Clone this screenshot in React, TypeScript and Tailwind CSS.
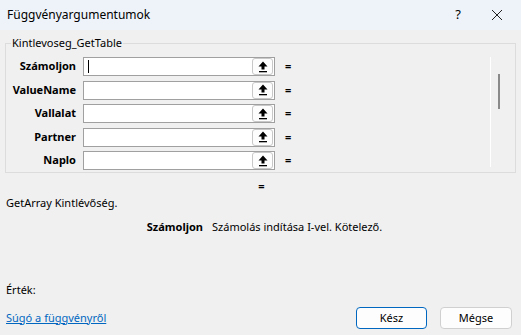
import React from 'react';

const rows = ['Számoljon', 'ValueName', 'Vallalat', 'Partner', 'Naplo'];

function RefButton() {
  return (
    <div className="w-[21px] h-[17px] mr-[1px] border border-[#c8c8c8] rounded-[3px] bg-[#fdfdfd] flex items-center justify-center">
      <svg width="10" height="12" viewBox="0 0 10 12">
        <path d="M5 0.5 L9.5 5.5 L6.5 5.5 L6.5 8.5 L3.5 8.5 L3.5 5.5 L0.5 5.5 Z" fill="#000" />
        <rect x="1" y="10" width="8" height="1.3" fill="#000" />
      </svg>
    </div>
  );
}

export default function App() {
  return (
    <div
      className="w-[521px] h-[335px] bg-[#f0f0f0] text-[11px] text-black overflow-hidden flex flex-col"
      style={{ fontFamily: '"Noto Sans", sans-serif' }}
    >
      {/* title bar */}
      <div className="h-[30px] bg-[#eef3f9] flex items-center pl-[7px] text-[12px]">
        <span className="flex-1">Függvényargumentumok</span>
        <span className="w-[20px] text-center mr-[23px] text-[13px]">?</span>
        <svg width="12" height="12" viewBox="0 0 12 12" className="mr-[18px]">
          <path d="M1 1 L11 11 M11 1 L1 11" stroke="#222" strokeWidth="1" />
        </svg>
      </div>

      {/* argument group */}
      <div className="relative mx-[5px] mt-[13px] h-[130px] border border-[#dcdcdc]">
        <span className="absolute -top-[9px] left-[5px] bg-[#f0f0f0] px-[1px] leading-[16px]">
          Kintlevoseg_GetTable
        </span>
        <div className="flex flex-col gap-[4.5px] pt-[13px]">
          {rows.map((r, i) => (
            <div key={r} className="flex items-center h-[19px]">
              <span className="w-[70px] text-right font-bold">{r}</span>
              <div className="ml-[7px] w-[192px] h-[19px] border border-[#a0a0a0] bg-white flex items-center">
                <div className="flex-1 pl-[4px]">
                  {i === 0 && <div className="w-[1px] h-[13px] bg-black" />}
                </div>
                <RefButton />
              </div>
              <span className="ml-[10px] font-bold">=</span>
            </div>
          ))}
        </div>
        <div className="absolute left-[484px] top-[13px] bottom-[5px] w-[1px] bg-white" />
        <div className="absolute left-[492px] top-[30px] h-[35px] w-[2px] bg-[#8a8a8a]" />
      </div>

      <div className="text-center font-bold mt-[5px] h-[16px] leading-[16px] pl-[2px]">=</div>
      <div className="pl-[6px] mt-[1px] leading-[16px]">GetArray Kintlévőség.</div>
      <div className="flex mt-[8px] leading-[16px]">
        <span className="w-[203px] text-right font-bold">Számoljon</span>
        <span className="ml-[9px]">Számolás indítása I-vel. Kötelező.</span>
      </div>

      <div className="pl-[6px] mt-[47px] leading-[16px]">Érték:</div>
      <div className="flex items-center mt-[9px] pl-[6px] pr-[9px]">
        <span className="flex-1 text-[#0067c0] underline">Súgó a függvényről</span>
        <button className="w-[71px] h-[22px] rounded-[4px] border border-[#0067c0] bg-[#fdfdfd]">Kész</button>
        <button className="ml-[13px] w-[72px] h-[22px] rounded-[4px] border border-[#d0d0d0] bg-[#fdfdfd]">Mégse</button>
      </div>
    </div>
  );
}
